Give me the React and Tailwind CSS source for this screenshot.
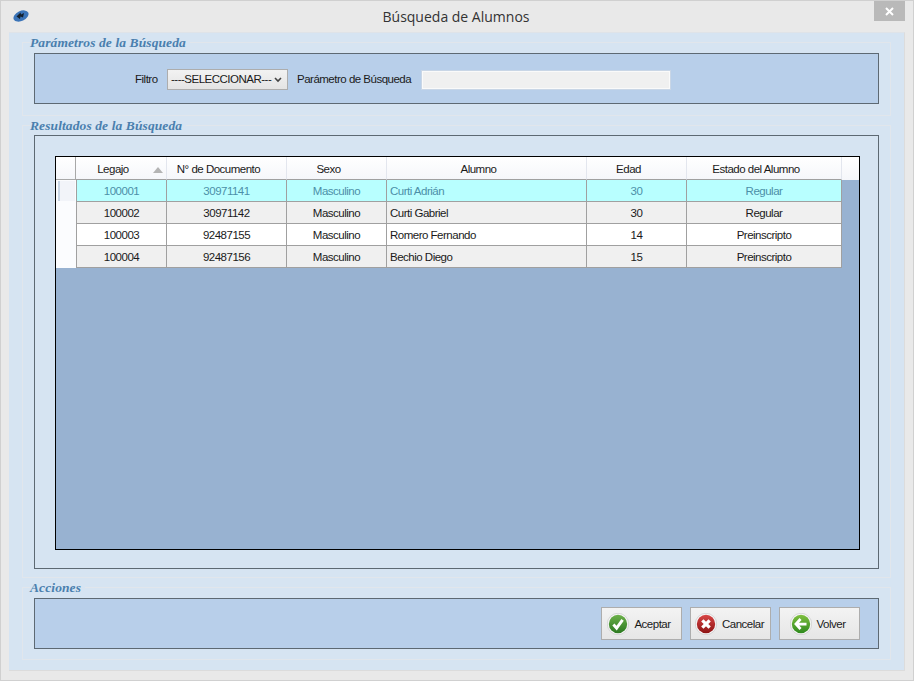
import React from 'react';

const rows = [
    { legajo: '100001', doc: '30971141', sexo: 'Masculino', alumno: 'Curti Adrián', edad: '30', estado: 'Regular' },
    { legajo: '100002', doc: '30971142', sexo: 'Masculino', alumno: 'Curti Gabriel', edad: '30', estado: 'Regular' },
    { legajo: '100003', doc: '92487155', sexo: 'Masculino', alumno: 'Romero Fernando', edad: '14', estado: 'Preinscripto' },
    { legajo: '100004', doc: '92487156', sexo: 'Masculino', alumno: 'Bechio Diego', edad: '15', estado: 'Preinscripto' },
];

const gridCols = 'grid grid-cols-[20px_91px_120px_100px_200px_100px_155px]';
const headCell = 'flex items-center justify-center border-r border-b border-r-[#e3e6ee] border-b-[#a0a0a0] pt-[4px] pr-[16px]';
const bodyCell = 'flex items-center justify-center border-r border-b border-[#a0a0a0] pt-[2px]';

function Group({ title, children, className }) {
    return (
        <fieldset className={`min-w-0 border border-[#e1e6ec] px-[11px] ${className}`}>
            <legend className="ml-[-4px] h-4 pt-[1px] pr-1 font-['Liberation_Serif',serif] text-[13.5px] leading-4 font-bold tracking-[0.1px] text-[#4a7fae] italic">
                {title}
            </legend>
            {children}
        </fieldset>
    );
}

function BallIcon({ from, to, children }) {
    return (
        <svg width="22" height="22" viewBox="0 0 24 24" className="shrink-0">
            <defs>
                <linearGradient id={`ball-${from}`} x1="0" y1="0" x2="0" y2="1">
                    <stop offset="0" stopColor={from} />
                    <stop offset="1" stopColor={to} />
                </linearGradient>
            </defs>
            <circle cx="12" cy="12" r="11.7" fill="#f6f6f6" stroke="#bdbdbd" strokeWidth="0.6" />
            <circle cx="12" cy="12" r="10" fill={`url(#ball-${from})`} />
            {children}
        </svg>
    );
}

function ActionButton({ label, children, className }) {
    return (
        <button className={`flex h-[33px] w-[81px] items-center justify-center gap-[5px] border border-[#adadad] bg-gradient-to-b from-[#f3f3f3] to-[#e6e6e6] ${className}`}>
            {children}
            <span className="pt-[2px]">{label}</span>
        </button>
    );
}

export default function App() {
    return (
        <div className="flex h-[681px] w-[914px] flex-col overflow-hidden border border-[#d0d0d0] bg-[#e9e9e9] font-['Liberation_Sans',sans-serif] text-[11.5px] tracking-[-0.5px] text-[#1a1a1a]">
            <div className="relative flex h-[31px] shrink-0 items-center justify-center pr-[2px]">
                <svg width="16" height="14" viewBox="0 0 16 14" className="absolute top-[8px] left-[12px]">
                    <ellipse cx="8" cy="7" rx="8" ry="5" transform="rotate(-25 8 7)" fill="#3b74b8" />
                    <path d="M3.5 7.5 L7.5 3.5 L8 5.5 L11 4 L10 8.5 L7.5 7.5 L7 10 Z" fill="#14202e" />
                </svg>
                <span className="font-['Open_Sans',sans-serif] text-[14px] tracking-normal text-[#333]">Búsqueda de Alumnos</span>
                <div className="absolute top-0 right-[8px] flex h-5 w-[31px] items-center justify-center bg-[#b9b9b9]">
                    <svg width="9" height="9" viewBox="0 0 9 9">
                        <path d="M1 1 L8 8 M8 1 L1 8" stroke="#fff" strokeWidth="2" />
                    </svg>
                </div>
            </div>

            <div className="mx-[8px] flex h-[639px] flex-col border-t border-r border-b border-t-[#dfe3e8] border-r-[#dcdcdc] border-b-[#dcdcdc] bg-[#d6e4f2] px-[13px] pt-[1px]">
                <Group title="Parámetros de la Búsqueda" className="mb-[1px] h-[82px]">
                    <div className="mt-[3px] flex h-[51px] items-center border border-[#5d6973] bg-[#b8cfea] pt-[2px] pl-[100px]">
                        <span className="w-[32px]">Filtro</span>
                        <div className="flex h-[21px] w-[121px] items-center justify-between border border-[#adadad] bg-gradient-to-b from-[#f2f2f2] to-[#e4e4e4] pr-[5px] pl-[3px] whitespace-nowrap">
                            <span>----SELECCIONAR---</span>
                            <svg width="8" height="6" viewBox="0 0 8 6">
                                <path d="M1 1 L4 4 L7 1" fill="none" stroke="#444" strokeWidth="1.6" />
                            </svg>
                        </div>
                        <span className="ml-[9px] w-[125px]">Parámetro de Búsqueda</span>
                        <div className="h-[18px] w-[248px] border border-[#fafafa] bg-[#f0f0f0] outline outline-[#c9d6e6]" />
                    </div>
                </Group>

                <Group title="Resultados de la Búsqueda" className="mb-[1px] h-[461px]">
                    <div className="mt-[2px] h-[434px] border border-[#5d6973] bg-[#d6e4f2] pt-5 pr-[18px] pb-[18px] pl-5">
                        <div className="h-full border border-black bg-[#98b2d1]">
                            <div className={`${gridCols} h-[23px] bg-gradient-to-b from-white to-[#f5f6fa]`}>
                                <div className="border-r border-b border-[#a8a8a8]" />
                                <div className={`relative ${headCell}`}>
                                    Legajo
                                    <svg width="10" height="6" viewBox="0 0 10 6" className="absolute top-[10px] right-[3px]">
                                        <path d="M0 6 L5 0 L10 6 Z" fill="#b4b4b4" />
                                    </svg>
                                </div>
                                <div className={headCell}>N° de Documento</div>
                                <div className={headCell}>Sexo</div>
                                <div className={headCell}>Alumno</div>
                                <div className={headCell}>Edad</div>
                                <div className={headCell}>Estado del Alumno</div>
                            </div>
                            {rows.map((row, i) => {
                                const rowColor = i === 0 ? 'bg-[#b8ffff] text-[#4c8fa8]' : i % 2 === 1 ? 'bg-[#f0f0f0]' : 'bg-white';
                                return (
                                    <div key={row.legajo} className={`${gridCols} h-[22px]`}>
                                        <div className="flex items-stretch bg-[#fbfcfe]">
                                            {i === 0 && <div className="my-[1px] ml-[2px] w-[17px] border-l-2 border-[#c9d6e6] bg-[#f2f4f9]" />}
                                        </div>
                                        <div className={`border-l ${bodyCell} ${rowColor}`}>{row.legajo}</div>
                                        <div className={`${bodyCell} ${rowColor}`}>{row.doc}</div>
                                        <div className={`${bodyCell} ${rowColor}`}>{row.sexo}</div>
                                        <div className={`${bodyCell} justify-start pl-[3px] ${rowColor}`}>{row.alumno}</div>
                                        <div className={`${bodyCell} ${rowColor}`}>{row.edad}</div>
                                        <div className={`${bodyCell} ${rowColor}`}>{row.estado}</div>
                                    </div>
                                );
                            })}
                        </div>
                    </div>
                </Group>

                <Group title="Acciones" className="h-[81px]">
                    <div className="mt-[3px] flex h-[51px] items-center justify-end gap-2 border border-[#5d6973] bg-[#b8cfea] pr-[18px]">
                        <ActionButton label="Aceptar" className="pr-[5px]">
                            <BallIcon from="#6cb04a" to="#2c7a22">
                                <path d="M7 12.5 L10.5 16.5 L17 7.5" fill="none" stroke="#fff" strokeWidth="3.2" />
                            </BallIcon>
                        </ActionButton>
                        <ActionButton label="Cancelar" className="pr-[2px]">
                            <BallIcon from="#d84545" to="#8e1414">
                                <path d="M8 8 L16 16 M16 8 L8 16" fill="none" stroke="#fff" strokeWidth="3.6" />
                            </BallIcon>
                        </ActionButton>
                        <ActionButton label="Volver" className="pr-[4px]">
                            <BallIcon from="#7fbf3f" to="#2f8a1e">
                                <path d="M11.5 6.5 L6.5 12 L11.5 17.5 M7 12 L18 12" fill="none" stroke="#fff" strokeWidth="3" />
                            </BallIcon>
                        </ActionButton>
                    </div>
                </Group>
            </div>
        </div>
    );
}
